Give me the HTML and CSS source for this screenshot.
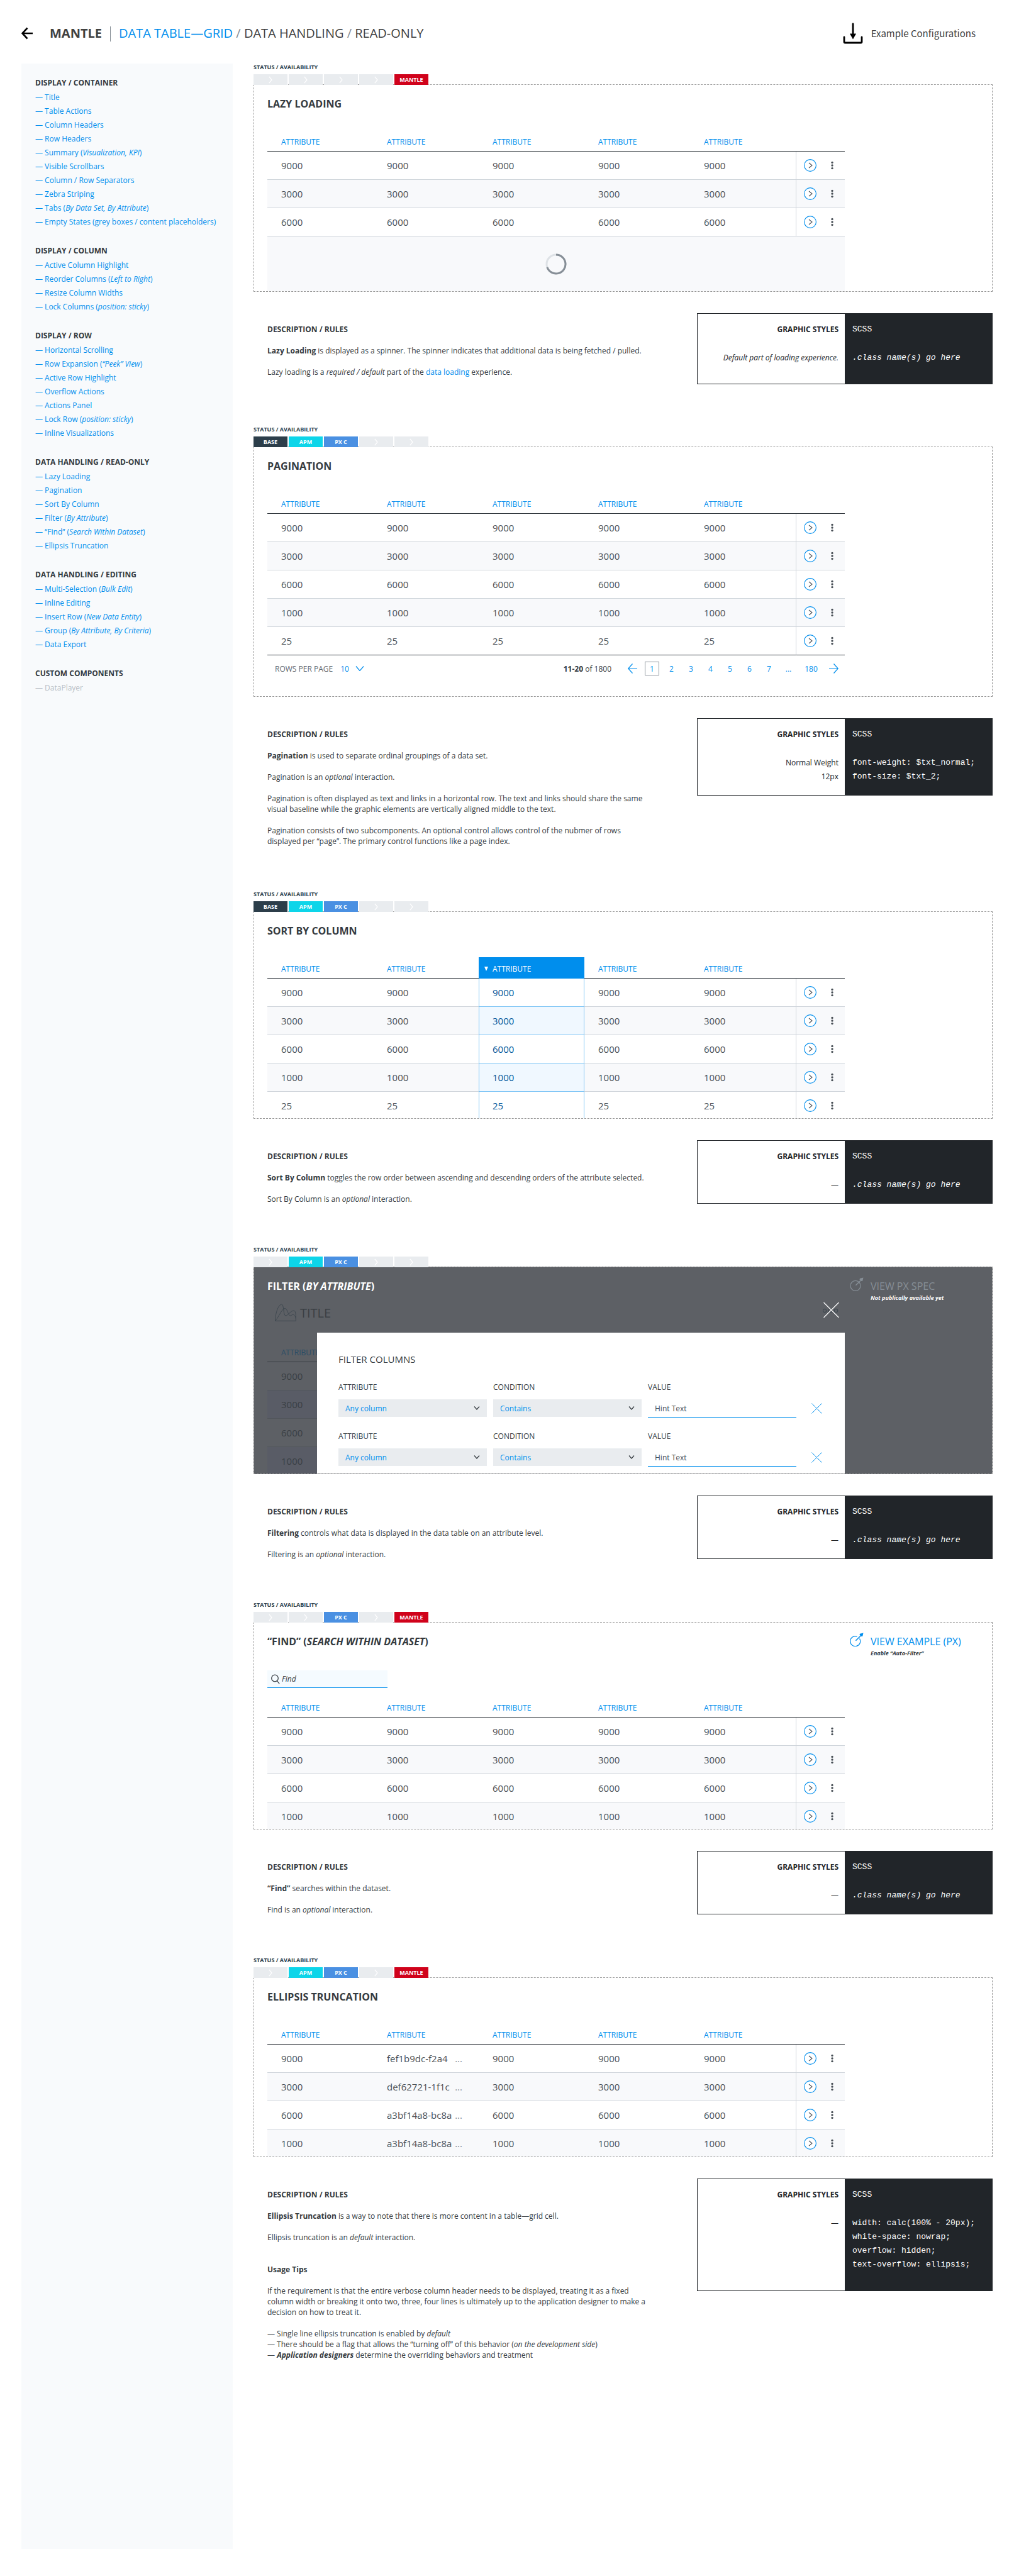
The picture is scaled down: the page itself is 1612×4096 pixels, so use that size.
FILE: index.html
```html
<!DOCTYPE html>
<html lang="en">
<head>
<meta charset="utf-8">
<meta name="viewport" content="width=device-width, initial-scale=1">
<title>Mantle | Data Table—Grid / Data Handling / Read-Only</title>
<link rel="stylesheet" href="styles.css">
</head>
<body>
<svg class="sprite" aria-hidden="true">
  <symbol id="go" viewBox="0 0 20 20"><circle cx="10" cy="10" r="9.4" fill="#fff" stroke="#008eed" stroke-width="1.1"/><path d="M8 6l5 4-5 4" fill="none" stroke="#495057" stroke-width="1.1"/></symbol>
  <symbol id="more" viewBox="0 0 4 14"><g fill="#495057"><circle cx="2" cy="2.4" r="1.7"/><circle cx="2" cy="7" r="1.7"/><circle cx="2" cy="11.6" r="1.7"/></g></symbol>
  <symbol id="next" viewBox="0 0 6 12"><path d="M.8 .8L5 6 .8 11.200" fill="none" stroke="#fff" stroke-width="1.200"/></symbol>
  <symbol id="cross" viewBox="0 0 17 17"><path d="M.5 .5l16 16M16.500 .5l-16 16" fill="none" stroke="currentColor"/></symbol>
  <symbol id="launch" viewBox="0 0 22 22"><g fill="none" stroke="currentColor" stroke-width="1.200"><path d="M11.500 6.200A8 8 0 1 0 15.500 9.500"/><path d="M9.400 12.800L17 5.200" stroke-width="1.600"/></g><path d="M21.500.5l-1.200 5.200-2.400.3-2.400-2.300.5-2z" fill="currentColor"/></symbol>
  <symbol id="launch-closed" viewBox="0 0 22 22"><g fill="none" stroke="currentColor" stroke-width="1.200"><circle cx="9" cy="13.400" r="8"/><path d="M9.400 12.800L17 5.200" stroke-width="1.600"/></g><path d="M21.500.5l-1.200 5.200-2.400.3-2.400-2.300.5-2z" fill="currentColor"/></symbol>
</svg>

<header class="masthead">
  <a class="back" href="#" aria-label="Back"><svg width="18" height="20" viewBox="0 0 18 20"><path d="M9.500 1.500L1.500 10l8 8.500M1.500 10H18" fill="none" stroke="#000" stroke-width="2.600"/></svg></a>
  <h1 class="crumbs"><strong>MANTLE</strong><span class="bar"></span><a href="#">DATA TABLE—GRID</a> <i>/</i> DATA HANDLING <i>/</i> READ-ONLY</h1>
  <a class="download" href="#"><svg width="32" height="34" viewBox="0 0 32 34"><path d="M2 23v7.500q0 1.500 1.500 1.500h25q1.500 0 1.500-1.500V23M16 2v18" fill="none" stroke="#000" stroke-width="2.800" stroke-linecap="round"/><path d="M11 17.500h10L16 26.500z"/></svg>Example Configurations</a>
</header>

<div class="page">
<nav class="sidebar">
  <section><h2>DISPLAY / CONTAINER</h2>
  <ul>
    <li><a href="#">— Title</a></li>
    <li><a href="#">— Table Actions</a></li>
    <li><a href="#">— Column Headers</a></li>
    <li><a href="#">— Row Headers</a></li>
    <li><a href="#">— Summary (<em>Visualization, KPI</em>)</a></li>
    <li><a href="#">— Visible Scrollbars</a></li>
    <li><a href="#">— Column / Row Separators</a></li>
    <li><a href="#">— Zebra Striping</a></li>
    <li><a href="#">— Tabs (<em>By Data Set, By Attribute</em>)</a></li>
    <li><a href="#">— Empty States (grey boxes / content placeholders)</a></li>
  </ul></section>
  <section><h2>DISPLAY / COLUMN</h2>
  <ul>
    <li><a href="#">— Active Column Highlight</a></li>
    <li><a href="#">— Reorder Columns (<em>Left to Right</em>)</a></li>
    <li><a href="#">— Resize Column Widths</a></li>
    <li><a href="#">— Lock Columns (<em>position: sticky</em>)</a></li>
  </ul></section>
  <section><h2>DISPLAY / ROW</h2>
  <ul>
    <li><a href="#">— Horizontal Scrolling</a></li>
    <li><a href="#">— Row Expansion (<em>“Peek” View</em>)</a></li>
    <li><a href="#">— Active Row Highlight</a></li>
    <li><a href="#">— Overflow Actions</a></li>
    <li><a href="#">— Actions Panel</a></li>
    <li><a href="#">— Lock Row (<em>position: sticky</em>)</a></li>
    <li><a href="#">— Inline Visualizations</a></li>
  </ul></section>
  <section><h2>DATA HANDLING / READ-ONLY</h2>
  <ul>
    <li><a href="#lazy">— Lazy Loading</a></li>
    <li><a href="#pagination">— Pagination</a></li>
    <li><a href="#sort">— Sort By Column</a></li>
    <li><a href="#filter">— Filter (<em>By Attribute</em>)</a></li>
    <li><a href="#find">— “Find” (<em>Search Within Dataset</em>)</a></li>
    <li><a href="#ellipsis">— Ellipsis Truncation</a></li>
  </ul></section>
  <section><h2>DATA HANDLING / EDITING</h2>
  <ul>
    <li><a href="#">— Multi-Selection (<em>Bulk Edit</em>)</a></li>
    <li><a href="#">— Inline Editing</a></li>
    <li><a href="#">— Insert Row (<em>New Data Entity</em>)</a></li>
    <li><a href="#">— Group (<em>By Attribute, By Criteria</em>)</a></li>
    <li><a href="#">— Data Export</a></li>
  </ul></section>
  <section><h2>CUSTOM COMPONENTS</h2>
  <ul><li class="pending">— DataPlayer</li></ul></section>
</nav>

<main>
<section class="spec" id="lazy">
  <h3 class="status">STATUS / AVAILABILITY</h3>
  <ul class="tags"><li><svg><use href="#next"/></svg></li><li><svg><use href="#next"/></svg></li><li><svg><use href="#next"/></svg></li><li><svg><use href="#next"/></svg></li><li class="on mantle">MANTLE</li></ul>
  <div class="panel">
    <h2 class="title">LAZY LOADING</h2>
    <div class="stage">
      <table class="grid">
        <thead><tr><th>ATTRIBUTE</th><th>ATTRIBUTE</th><th>ATTRIBUTE</th><th>ATTRIBUTE</th><th>ATTRIBUTE</th><td class="acts"></td></tr></thead>
        <tbody>
        <tr><td>9000</td><td>9000</td><td>9000</td><td>9000</td><td>9000</td><td class="acts"><div><button aria-label="Open"><svg class="go"><use href="#go"/></svg></button><button aria-label="More"><svg class="more"><use href="#more"/></svg></button></div></td></tr>
        <tr><td>3000</td><td>3000</td><td>3000</td><td>3000</td><td>3000</td><td class="acts"><div><button aria-label="Open"><svg class="go"><use href="#go"/></svg></button><button aria-label="More"><svg class="more"><use href="#more"/></svg></button></div></td></tr>
        <tr><td>6000</td><td>6000</td><td>6000</td><td>6000</td><td>6000</td><td class="acts"><div><button aria-label="Open"><svg class="go"><use href="#go"/></svg></button><button aria-label="More"><svg class="more"><use href="#more"/></svg></button></div></td></tr>
        </tbody>
      </table>
      <div class="loading"><svg width="34" height="34" viewBox="0 0 34 34" fill="none" stroke-width="3"><circle cx="17" cy="17" r="15" stroke="#dee2e6"/><path d="M17 2a15 15 0 1 1-14.100 20.100" stroke="#868e96"/></svg></div>
    </div>
  </div>
  <div class="notes">
    <div class="rules"><h3>DESCRIPTION / RULES</h3>
      <p><b>Lazy Loading</b> is displayed as a spinner. The spinner indicates that additional data is being fetched / pulled.</p>
      <p>Lazy loading is a <em>required / default</em> part of the <a href="#">data loading</a> experience.</p></div>
    <div class="styles roomy"><div class="graphic"><h3>GRAPHIC STYLES</h3><p><em>Default part of loading experience.</em></p></div>
      <div class="scss"><h3>SCSS</h3><p><em>.class name(s) go here</em></p></div></div>
  </div>
</section>

<section class="spec" id="pagination">
  <h3 class="status">STATUS / AVAILABILITY</h3>
  <ul class="tags"><li class="on base">BASE</li><li class="on apm">APM</li><li class="on pxc">PX C</li><li><svg><use href="#next"/></svg></li><li><svg><use href="#next"/></svg></li></ul>
  <div class="panel padded">
    <h2 class="title">PAGINATION</h2>
    <div class="stage">
      <table class="grid closed">
        <thead><tr><th>ATTRIBUTE</th><th>ATTRIBUTE</th><th>ATTRIBUTE</th><th>ATTRIBUTE</th><th>ATTRIBUTE</th><td class="acts"></td></tr></thead>
        <tbody>
        <tr><td>9000</td><td>9000</td><td>9000</td><td>9000</td><td>9000</td><td class="acts"><div><button aria-label="Open"><svg class="go"><use href="#go"/></svg></button><button aria-label="More"><svg class="more"><use href="#more"/></svg></button></div></td></tr>
        <tr><td>3000</td><td>3000</td><td>3000</td><td>3000</td><td>3000</td><td class="acts"><div><button aria-label="Open"><svg class="go"><use href="#go"/></svg></button><button aria-label="More"><svg class="more"><use href="#more"/></svg></button></div></td></tr>
        <tr><td>6000</td><td>6000</td><td>6000</td><td>6000</td><td>6000</td><td class="acts"><div><button aria-label="Open"><svg class="go"><use href="#go"/></svg></button><button aria-label="More"><svg class="more"><use href="#more"/></svg></button></div></td></tr>
        <tr><td>1000</td><td>1000</td><td>1000</td><td>1000</td><td>1000</td><td class="acts"><div><button aria-label="Open"><svg class="go"><use href="#go"/></svg></button><button aria-label="More"><svg class="more"><use href="#more"/></svg></button></div></td></tr>
        <tr><td>25</td><td>25</td><td>25</td><td>25</td><td>25</td><td class="acts"><div><button aria-label="Open"><svg class="go"><use href="#go"/></svg></button><button aria-label="More"><svg class="more"><use href="#more"/></svg></button></div></td></tr>
        </tbody>
      </table>
      <div class="pager">
        <label for="rows">ROWS PER PAGE</label>
        <select id="rows"><option>10</option></select>
        <p class="range"><b>11-20</b> of 1800</p>
        <a href="#" aria-label="Previous page"><svg width="15" height="16" viewBox="0 0 15 16"><path d="M7.500 .5L.8 8l6.700 7.500M.8 8H15" fill="none" stroke="currentColor" stroke-width="1.200"/></svg></a>
        <a class="current" href="#">1</a><a href="#">2</a><a href="#">3</a><a href="#">4</a><a href="#">5</a><a href="#">6</a><a href="#">7</a><a href="#">...</a><a class="last" href="#">180</a>
        <a href="#" aria-label="Next page"><svg width="15" height="16" viewBox="0 0 15 16"><path d="M7.500 .5L14.200 8l-6.700 7.500M14.200 8H0" fill="none" stroke="currentColor" stroke-width="1.200"/></svg></a>
      </div>
    </div>
  </div>
  <div class="notes long">
    <div class="rules"><h3>DESCRIPTION / RULES</h3>
      <p><b>Pagination</b> is used to separate ordinal groupings of a data set.</p>
      <p>Pagination is an <em>optional</em> interaction.</p>
      <p>Pagination is often displayed as text and links in a horizontal row. The text and links should share the same visual baseline while the graphic elements are vertically aligned middle to the text.</p>
      <p>Pagination consists of two subcomponents. An optional control allows control of the nubmer of rows displayed per “page”. The primary control functions like a page index.</p></div>
    <div class="styles"><div class="graphic"><h3>GRAPHIC STYLES</h3><p>Normal Weight</p><p>12px</p></div>
      <div class="scss"><h3>SCSS</h3><p>font-weight: $txt_normal;</p><p>font-size: $txt_2;</p></div></div>
  </div>
</section>

<section class="spec" id="sort">
  <h3 class="status">STATUS / AVAILABILITY</h3>
  <ul class="tags"><li class="on base">BASE</li><li class="on apm">APM</li><li class="on pxc">PX C</li><li><svg><use href="#next"/></svg></li><li><svg><use href="#next"/></svg></li></ul>
  <div class="panel cropped">
    <h2 class="title">SORT BY COLUMN</h2>
    <div class="stage">
      <table class="grid">
        <thead><tr><th>ATTRIBUTE</th><th>ATTRIBUTE</th><th class="sorted" aria-sort="descending"><svg width="8" height="8" viewBox="0 0 8 8"><path d="M1 0h6L4 7z" fill="#fff"/></svg>ATTRIBUTE</th><th>ATTRIBUTE</th><th>ATTRIBUTE</th><td class="acts"></td></tr></thead>
        <tbody>
        <tr><td>9000</td><td>9000</td><td class="sorted">9000</td><td>9000</td><td>9000</td><td class="acts"><div><button aria-label="Open"><svg class="go"><use href="#go"/></svg></button><button aria-label="More"><svg class="more"><use href="#more"/></svg></button></div></td></tr>
        <tr><td>3000</td><td>3000</td><td class="sorted">3000</td><td>3000</td><td>3000</td><td class="acts"><div><button aria-label="Open"><svg class="go"><use href="#go"/></svg></button><button aria-label="More"><svg class="more"><use href="#more"/></svg></button></div></td></tr>
        <tr><td>6000</td><td>6000</td><td class="sorted">6000</td><td>6000</td><td>6000</td><td class="acts"><div><button aria-label="Open"><svg class="go"><use href="#go"/></svg></button><button aria-label="More"><svg class="more"><use href="#more"/></svg></button></div></td></tr>
        <tr><td>1000</td><td>1000</td><td class="sorted">1000</td><td>1000</td><td>1000</td><td class="acts"><div><button aria-label="Open"><svg class="go"><use href="#go"/></svg></button><button aria-label="More"><svg class="more"><use href="#more"/></svg></button></div></td></tr>
        <tr><td>25</td><td>25</td><td class="sorted">25</td><td>25</td><td>25</td><td class="acts"><div><button aria-label="Open"><svg class="go"><use href="#go"/></svg></button><button aria-label="More"><svg class="more"><use href="#more"/></svg></button></div></td></tr>
        </tbody>
      </table>
    </div>
  </div>
  <div class="notes">
    <div class="rules"><h3>DESCRIPTION / RULES</h3>
      <p><b>Sort By Column</b> toggles the row order between ascending and descending orders of the attribute selected.</p>
      <p>Sort By Column is an <em>optional</em> interaction.</p></div>
    <div class="styles"><div class="graphic"><h3>GRAPHIC STYLES</h3><p>—</p></div>
      <div class="scss"><h3>SCSS</h3><p><em>.class name(s) go here</em></p></div></div>
  </div>
</section>

<section class="spec" id="filter">
  <h3 class="status">STATUS / AVAILABILITY</h3>
  <ul class="tags"><li><svg><use href="#next"/></svg></li><li class="on apm">APM</li><li class="on pxc">PX C</li><li><svg><use href="#next"/></svg></li><li><svg><use href="#next"/></svg></li></ul>
  <div class="panel cropped dimmed">
    <h2 class="title">FILTER (<em>BY ATTRIBUTE</em>)</h2>
    <div class="example"><svg><use href="#launch-closed"/></svg><div><span>VIEW PX SPEC</span><small>Not publically available yet</small></div></div>
    <div class="stage">
      <div class="toolbar">
        <svg width="34" height="28" viewBox="0 0 34 28" fill="none" stroke="#3f4850" stroke-width="1"><path d="M.5 27.300C1 12 6.500 1 10.500 1c4.500 0 2.500 18 6.500 18s8-8 13-8c3.500 0 3.500 8 3.500 16.300zM.5 27.300C7 20 11 7.500 16 7.500c4 0 5 11.500 8.500 11.500 2 0 2.500-1.700 4.500-1.700s4.500 2.700 4.500 9.700"/></svg>
        <span>TITLE</span>
        <button aria-label="Close"><svg width="26" height="26" viewBox="0 0 26 26" fill="none"><g stroke="#3f4850" stroke-width="1.200"><circle cx="3" cy="14" r="2.700"/><circle cx="12" cy="14" r="2.700"/><circle cx="21" cy="14" r="2.700"/></g><path d="M1.500 1l24 24M25.500 1l-24 24" stroke="#fff" stroke-width="1.200"/></svg></button>
      </div>
      <div class="layers">
        <table class="grid shade">
          <thead><tr><th>ATTRIBUTE</th></tr></thead>
          <tbody><tr><td>9000</td></tr><tr><td>3000</td></tr><tr><td>6000</td></tr><tr><td>1000</td></tr></tbody>
        </table>
        <form class="modal">
          <h4>FILTER COLUMNS</h4>
          <div class="rule">
            <div><label for="a1">ATTRIBUTE</label><select id="a1"><option>Any column</option></select></div>
            <div><label for="c1">CONDITION</label><select id="c1"><option>Contains</option></select></div>
            <div><label for="v1">VALUE</label><input id="v1" type="text" placeholder="Hint Text"></div>
            <button type="button" aria-label="Remove filter"><svg><use href="#cross"/></svg></button>
          </div>
          <div class="rule">
            <div><label for="a2">ATTRIBUTE</label><select id="a2"><option>Any column</option></select></div>
            <div><label for="c2">CONDITION</label><select id="c2"><option>Contains</option></select></div>
            <div><label for="v2">VALUE</label><input id="v2" type="text" placeholder="Hint Text"></div>
            <button type="button" aria-label="Remove filter"><svg><use href="#cross"/></svg></button>
          </div>
        </form>
      </div>
    </div>
  </div>
  <div class="notes">
    <div class="rules"><h3>DESCRIPTION / RULES</h3>
      <p><b>Filtering</b> controls what data is displayed in the data table on an attribute level.</p>
      <p>Filtering is an <em>optional</em> interaction.</p></div>
    <div class="styles"><div class="graphic"><h3>GRAPHIC STYLES</h3><p>—</p></div>
      <div class="scss"><h3>SCSS</h3><p><em>.class name(s) go here</em></p></div></div>
  </div>
</section>

<section class="spec" id="find">
  <h3 class="status">STATUS / AVAILABILITY</h3>
  <ul class="tags"><li><svg><use href="#next"/></svg></li><li><svg><use href="#next"/></svg></li><li class="on pxc">PX C</li><li><svg><use href="#next"/></svg></li><li class="on mantle">MANTLE</li></ul>
  <div class="panel cropped">
    <h2 class="title">“FIND” (<em>SEARCH WITHIN DATASET</em>)</h2>
    <div class="example"><svg><use href="#launch"/></svg><div><a href="#">VIEW EXAMPLE (PX)</a><small>Enable “Auto-Filter”</small></div></div>
    <div class="stage">
      <label class="finder"><svg width="14" height="16" viewBox="0 0 14 16" fill="none" stroke="#343a40" stroke-width="1.200"><circle cx="6" cy="6.500" r="5.300"/><path d="M9.700 10.800l3.500 4.500"/></svg><input type="search" placeholder="Find" aria-label="Find"></label>
      <table class="grid">
        <thead><tr><th>ATTRIBUTE</th><th>ATTRIBUTE</th><th>ATTRIBUTE</th><th>ATTRIBUTE</th><th>ATTRIBUTE</th><td class="acts"></td></tr></thead>
        <tbody>
        <tr><td>9000</td><td>9000</td><td>9000</td><td>9000</td><td>9000</td><td class="acts"><div><button aria-label="Open"><svg class="go"><use href="#go"/></svg></button><button aria-label="More"><svg class="more"><use href="#more"/></svg></button></div></td></tr>
        <tr><td>3000</td><td>3000</td><td>3000</td><td>3000</td><td>3000</td><td class="acts"><div><button aria-label="Open"><svg class="go"><use href="#go"/></svg></button><button aria-label="More"><svg class="more"><use href="#more"/></svg></button></div></td></tr>
        <tr><td>6000</td><td>6000</td><td>6000</td><td>6000</td><td>6000</td><td class="acts"><div><button aria-label="Open"><svg class="go"><use href="#go"/></svg></button><button aria-label="More"><svg class="more"><use href="#more"/></svg></button></div></td></tr>
        <tr><td>1000</td><td>1000</td><td>1000</td><td>1000</td><td>1000</td><td class="acts"><div><button aria-label="Open"><svg class="go"><use href="#go"/></svg></button><button aria-label="More"><svg class="more"><use href="#more"/></svg></button></div></td></tr>
        </tbody>
      </table>
    </div>
  </div>
  <div class="notes">
    <div class="rules"><h3>DESCRIPTION / RULES</h3>
      <p><b>“Find”</b> searches within the dataset.</p>
      <p>Find is an <em>optional</em> interaction.</p></div>
    <div class="styles"><div class="graphic"><h3>GRAPHIC STYLES</h3><p>—</p></div>
      <div class="scss"><h3>SCSS</h3><p><em>.class name(s) go here</em></p></div></div>
  </div>
</section>

<section class="spec" id="ellipsis">
  <h3 class="status">STATUS / AVAILABILITY</h3>
  <ul class="tags"><li><svg><use href="#next"/></svg></li><li class="on apm">APM</li><li class="on pxc">PX C</li><li><svg><use href="#next"/></svg></li><li class="on mantle">MANTLE</li></ul>
  <div class="panel cropped short">
    <h2 class="title">ELLIPSIS TRUNCATION</h2>
    <div class="stage">
      <table class="grid">
        <thead><tr><th>ATTRIBUTE</th><th>ATTRIBUTE</th><th>ATTRIBUTE</th><th>ATTRIBUTE</th><th>ATTRIBUTE</th><td class="acts"></td></tr></thead>
        <tbody>
        <tr><td>9000</td><td><div class="cut"><span>fef1b9dc-f2a4</span><span>...</span></div></td><td>9000</td><td>9000</td><td>9000</td><td class="acts"><div><button aria-label="Open"><svg class="go"><use href="#go"/></svg></button><button aria-label="More"><svg class="more"><use href="#more"/></svg></button></div></td></tr>
        <tr><td>3000</td><td><div class="cut"><span>def62721-1f1c</span><span>...</span></div></td><td>3000</td><td>3000</td><td>3000</td><td class="acts"><div><button aria-label="Open"><svg class="go"><use href="#go"/></svg></button><button aria-label="More"><svg class="more"><use href="#more"/></svg></button></div></td></tr>
        <tr><td>6000</td><td><div class="cut"><span>a3bf14a8-bc8a</span><span>...</span></div></td><td>6000</td><td>6000</td><td>6000</td><td class="acts"><div><button aria-label="Open"><svg class="go"><use href="#go"/></svg></button><button aria-label="More"><svg class="more"><use href="#more"/></svg></button></div></td></tr>
        <tr><td>1000</td><td><div class="cut"><span>a3bf14a8-bc8a</span><span>...</span></div></td><td>1000</td><td>1000</td><td>1000</td><td class="acts"><div><button aria-label="Open"><svg class="go"><use href="#go"/></svg></button><button aria-label="More"><svg class="more"><use href="#more"/></svg></button></div></td></tr>
        </tbody>
      </table>
    </div>
  </div>
  <div class="notes">
    <div class="rules"><h3>DESCRIPTION / RULES</h3>
      <p><b>Ellipsis Truncation</b> is a way to note that there is more content in a table—grid cell.</p>
      <p>Ellipsis truncation is an <em>default</em> interaction.</p>
      <h4>Usage Tips</h4>
      <p>If the requirement is that the entire verbose column header needs to be displayed, treating it as a fixed column width or breaking it onto two, three, four lines is ultimately up to the application designer to make a decision on how to treat it.</p>
      <ul><li>— Single line ellipsis truncation is enabled by <em>default</em></li>
      <li>— There should be a flag that allows the “turning off” of this behavior (<em>on the development side</em>)</li>
      <li>— <b><em>Application designers</em></b> determine the overriding behaviors and treatment</li></ul></div>
    <div class="styles roomy"><div class="graphic"><h3>GRAPHIC STYLES</h3><p>—</p></div>
      <div class="scss"><h3>SCSS</h3><p>width: calc(100% - 20px);</p><p>white-space: nowrap;</p><p>overflow: hidden;</p><p>text-overflow: ellipsis;</p></div></div>
  </div>
</section>
</main>
</div>
</body>
</html>
```
FILE: styles.css
```css
:root {
  --blue: #008eed;
  --ink: #343a40;
  --text: #495057;
  --line: #ced4da;
  --soft: #f8f9fb;
}
* { box-sizing: border-box; margin: 0; padding: 0; }
body {
  min-height: 100vh;
  display: flex;
  flex-direction: column;
  padding: 0 34px 43px;
  background: #fff;
  color: var(--ink);
  font: 12px/17px "Open Sans", "Noto Sans", sans-serif;
}
a { color: var(--blue); text-decoration: none; }
ul { list-style: none; }
button { border: 0; background: none; display: block; color: inherit; font: inherit; }
svg { display: block; }
input, select { font: inherit; border: 0; border-radius: 0; appearance: none; outline: 0; }
h1, h2, h3, h4 { font-size: 12px; font-weight: 700; }
.sprite { position: absolute; width: 0; height: 0; }

/* Masthead */
.masthead { display: flex; align-items: center; height: 101px; padding: 4px 27px 0 0; }
.back { width: 45px; }
.crumbs { flex: 1; font-size: 20px; line-height: 28px; font-weight: 400; color: #414141; }
.crumbs i { font-style: normal; color: #868e96; }
.bar { display: inline-block; width: 1px; height: 24px; margin: 0 13px; background: #868e96; vertical-align: middle; }
.download {
  display: flex; align-items: center; gap: 13px;
  color: #414141;
  font: 15px/22px "Noto Sans CJK SC", "Noto Sans", sans-serif;
}

/* Sidebar */
.page { flex: 1; display: grid; grid-template-columns: 336px minmax(0, 1fr); column-gap: 33px; }
.sidebar { display: flex; flex-direction: column; gap: 23px; padding: 19px 22px; background: #f8fafc; white-space: nowrap; }
.sidebar h2 { line-height: 24px; }
.sidebar li { line-height: 22px; }
.pending { color: #b9bfc6; }

/* Section chrome */
.spec { margin-bottom: 66px; }
.status { font-size: 9px; line-height: 12px; margin-bottom: 5px; color: #2c3e4a; }
.tags { display: flex; gap: 2px; margin-bottom: -1px; }
.tags li {
  width: 54px; height: 17px;
  display: grid; place-items: center;
  background: #e9ecef; color: #fff;
  font-size: 9px; line-height: 17px; font-weight: 700;
}
.tags svg { width: 6px; height: 12px; }
.tags .on { position: relative; }
.tags .base { background: #2c3e4a; }
.tags .apm { background: #0dd5e9; }
.tags .pxc { background: #4a90e2; }
.tags .mantle { background: #d0021b; }

.panel {
  display: grid;
  grid-template-columns: minmax(0, 51fr) minmax(0, 13fr);
  align-content: start;
  padding: 20px 0 0 21px;
  border: 1px dashed #999;
}
.padded { padding-bottom: 23px; }
.cropped { max-height: 330px; overflow: hidden; }
.short { max-height: 286px; }
.title { font-size: 16px; line-height: 20px; }
.stage { grid-column: 1; grid-row: 2; margin-top: 32px; }
.example { grid-column: 2; grid-row: 1; height: 20px; display: flex; gap: 11px; padding-left: 8px; color: var(--blue); }
.example svg { width: 22px; height: 22px; flex: none; margin-top: -4px; }
.example a, .example span { display: block; font-size: 16px; line-height: 20px; }
.example small { display: block; font-size: 9px; line-height: 18px; font-weight: 700; font-style: italic; color: var(--ink); }

/* Data grid */
.grid { width: 100%; table-layout: fixed; border-collapse: separate; border-spacing: 0; text-align: left; }
.grid th, .grid thead td { height: 34px; padding-top: 3px; border-bottom: 1px solid var(--ink); }
.grid th { padding-left: 22px; font-weight: 400; color: var(--blue); }
.grid tbody td { height: 45px; padding-left: 22px; border-bottom: 1px solid var(--line); font-size: 15px; line-height: 20px; color: var(--text); }
.grid tbody tr:nth-child(even) { background: var(--soft); }
.grid .acts { width: 78px; padding-left: 0; }
.grid tbody .acts { border-left: 1px solid var(--line); }
.acts div { display: flex; align-items: center; padding-left: 12px; gap: 23px; }
.go { width: 20px; height: 20px; }
.more { width: 4px; height: 14px; }
.closed tbody tr:last-child td { border-bottom-color: var(--ink); }
.grid th.sorted { padding-left: 8px; background: var(--blue); border-bottom-color: var(--blue); color: #fff; }
.sorted svg { display: inline-block; margin-right: 6px; }
.grid tbody td.sorted { padding-left: 21px; border: 1px solid #7cc4f5; border-top: 0; color: #00589c; }
.grid tr:nth-child(even) td.sorted { background: #f0f8ff; }
.cut { display: flex; justify-content: space-between; width: 120px; }
.cut span + span { color: #868e96; }

.loading { height: 87px; display: grid; place-items: center; background: var(--soft); }

.pager { display: flex; align-items: center; gap: 8px; height: 42px; padding: 0 6px 0 12px; color: #5f666d; }
.pager select {
  width: 38px; margin-left: 4px; color: var(--blue);
  background: url("data:image/svg+xml,%3Csvg xmlns='http://www.w3.org/2000/svg' width='14' height='8'%3E%3Cpath d='M1 .5l6 7 6-7' fill='none' stroke='%23008eed' stroke-width='1.200'/%3E%3C/svg%3E") no-repeat right center;
}
.range { margin: 0 14px 0 auto; color: var(--ink); }
.pager a { width: 23px; height: 22px; display: grid; place-items: center; }
.pager .current { border: 1px solid #868e96; }
.pager .last { width: 33px; }

.finder { display: flex; align-items: center; gap: 3px; width: 191px; height: 28px; margin: 4px 0 13px; padding-left: 6px; background: #f5fbff; border-bottom: 1px solid var(--blue); }
.finder input { width: 140px; background: none; font-style: italic; }
.finder input::placeholder { color: var(--ink); opacity: 1; }

/* Filter overlay */
.dimmed { background: #5d6065; }
.dimmed .title, .dimmed .example small { color: #fff; }
.dimmed .example { color: #868e96; }
.dimmed .stage { margin-top: 0; }
.toolbar { display: flex; align-items: center; gap: 6px; height: 64px; padding: 0 9px 0 12px; color: #3a3f44; font-size: 20px; }
.toolbar button { margin: -8px 0 0 auto; }
.layers { display: grid; }
.layers > * { grid-area: 1 / 1; }
.shade { margin-top: 13px; align-self: start; }
.shade th { color: #2b4d66; }
.grid.shade tbody td { color: #3a3f44; border-color: #52565c; }
.grid.shade tbody tr:nth-child(even) { background: #595c66; }
.modal { margin-left: 79px; padding: 32px 23px 34px 34px; background: #fff; }
.modal h4 { font-size: 15px; line-height: 20px; font-weight: 400; margin-bottom: 27px; }
.rule { display: grid; grid-template-columns: repeat(3, minmax(0, 1fr)) 44px; gap: 10px; margin-bottom: 22px; }
.rule label { display: block; line-height: 16px; margin-bottom: 11px; }
.rule select, .rule input { display: block; width: 100%; padding: 0 11px; }
.rule select {
  height: 28px; color: var(--blue);
  background: #e9ecef url("data:image/svg+xml,%3Csvg xmlns='http://www.w3.org/2000/svg' width='10' height='6'%3E%3Cpath d='M1 .5l4 4.500 4-4.500' fill='none' stroke='%23343a40' stroke-width='1.200'/%3E%3C/svg%3E") no-repeat right 11px center;
}
.rule input { height: 29px; background: none; border-bottom: 1px solid var(--blue); }
.rule input::placeholder { color: var(--text); opacity: 1; }
.rule button { height: 28px; margin-top: 27px; display: grid; place-items: center; color: var(--blue); }
.rule button svg { width: 17px; height: 17px; }

/* Notes under each panel */
.notes { display: grid; grid-template-columns: minmax(0, 3fr) minmax(0, 2fr); align-items: start; margin-top: 34px; }
.long { padding-bottom: 4px; }
.rules { padding: 17px 78px 0 22px; }
.rules > * + * { margin-top: 17px; }
.rules h4 { padding-top: 17px; }
.styles { display: grid; grid-template-columns: 1fr 1fr; border: 1px solid #212529; color: #212529; }
.styles h3 { margin-bottom: 26px; }
.styles p { line-height: 22px; }
.graphic, .scss { padding: 16px 10px 18px; }
.roomy > div { padding-bottom: 30px; }
.graphic { text-align: right; }
.scss { padding-left: 12px; background: #212529; color: #fff; font: 13px/17px "Liberation Mono", monospace; white-space: nowrap; }
.scss h3 { font-size: 13px; font-weight: 400; }
```
